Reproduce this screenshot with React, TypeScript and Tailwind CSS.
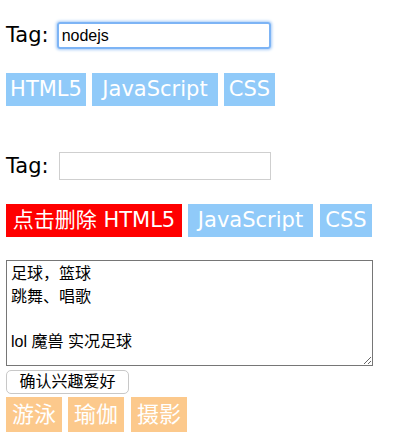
const tagBase = "text-white text-[21px] h-[33px] leading-[33px] text-center whitespace-nowrap";
const blue = "bg-[#90caf9] " + tagBase;
const orange = "bg-[#fcc98c] text-white text-[22px] h-[35px] leading-[35px] text-center w-[56px]";

export default function App() {
  return (
    <div className="bg-white text-black w-[400px] h-[446px] overflow-hidden pl-[6px] font-['DejaVu_Sans','Noto_Sans_CJK_SC',sans-serif]">
      {/* first tag input, focused */}
      <div className="flex items-center pt-[20px] h-[51px]">
        <span className="text-[21px] leading-none mr-[8px]">Tag:</span>
        <div className="w-[214px] h-[27px] border-2 border-[#7db4f5] rounded-[3px] shadow-[0_0_3px_1px_#a9cdf7] flex items-center px-[3px] text-[16px] font-['Liberation_Sans',sans-serif]">
          nodejs
        </div>
      </div>
      <div className="flex gap-[6px] mt-[22px]">
        <span className={blue + " w-[80px]"}>HTML5</span>
        <span className={blue + " w-[126px]"}>JavaScript</span>
        <span className={blue + " w-[51px]"}>CSS</span>
      </div>

      {/* second tag input */}
      <div className="flex items-center mt-[46px]">
        <span className="text-[21px] leading-none mr-[10px]">Tag:</span>
        <input className="w-[212px] h-[28px] border border-[#cfcfcf] outline-none" />
      </div>
      <div className="flex gap-[6px] mt-[24px]">
        <span className={"bg-[#ff0000] w-[176px] " + tagBase}>点击删除 HTML5</span>
        <span className={blue + " w-[125px]"}>JavaScript</span>
        <span className={blue + " w-[52px] ml-[1px]"}>CSS</span>
      </div>

      {/* hobbies */}
      <textarea
        className="block mt-[23px] w-[367px] h-[106px] border border-[#767676] px-[4px] py-[2px] text-[16px] leading-[22.5px] outline-none resize-y font-['Liberation_Sans','Noto_Sans_CJK_SC',sans-serif]"
        defaultValue={"足球，篮球\n跳舞、唱歌\n\nlol 魔兽 实况足球"}
      />
      <button className="block mt-[4px] w-[123px] h-[24px] border border-[#c8c8c8] rounded-[5px] bg-white text-[16px] leading-none font-['Liberation_Sans','Noto_Sans_CJK_SC',sans-serif]">
        确认兴趣爱好
      </button>
      <div className="flex gap-[6px] mt-[3px]">
        <span className={orange}>游泳</span>
        <span className={orange}>瑜伽</span>
        <span className={orange + " ml-[1px]"}>摄影</span>
      </div>
    </div>
  );
}
